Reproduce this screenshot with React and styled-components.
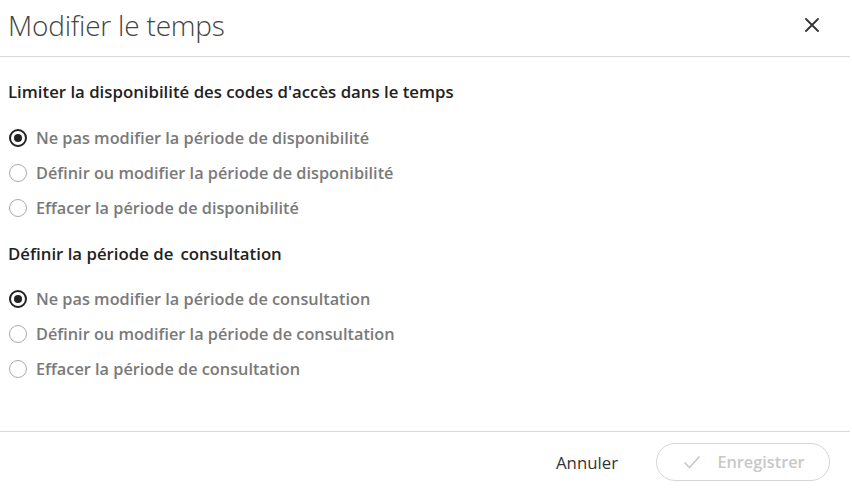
import styled, { createGlobalStyle } from "styled-components";

const Global = createGlobalStyle`
  html, body { margin: 0; padding: 0; background: #fff; }
  body { font-family: "Open Sans", "Noto Sans", sans-serif; }
`;

const Dialog = styled.div`
  width: 850px;
  height: 492px;
  display: flex;
  flex-direction: column;
  background: #fff;
`;

const Header = styled.div`
  height: 56px;
  display: flex;
  align-items: center;
  justify-content: space-between;
  padding: 0 30px 0 8px;
  border-bottom: 1px solid #d9d9d9;
  box-sizing: content-box;
`;

const Title = styled.h1`
  margin: 0;
  font-size: 28px;
  font-weight: 300;
  color: #444;
  letter-spacing: -0.2px;
  padding-bottom: 6px;
`;

const CloseButton = styled.button`
  border: 0;
  background: none;
  padding: 0;
  width: 16px;
  height: 16px;
  display: flex;
  align-items: center;
  justify-content: center;
  cursor: pointer;
  margin-bottom: 6px;
`;

const Body = styled.div`
  flex: 1;
  padding: 23px 8px 0;
  display: flex;
  flex-direction: column;
`;

const Section = styled.div`
  display: flex;
  flex-direction: column;
  margin-bottom: ${(p) => (p.$last ? 0 : 17)}px;
`;

const Heading = styled.div`
  font-size: 16.8px;
  font-weight: 600;
  color: #222;
  line-height: 24px;
  margin-bottom: ${(p) => p.$gap}px;
`;

const Option = styled.label`
  display: flex;
  align-items: center;
  gap: 9px;
  height: 35px;
  font-size: 16.3px;
  font-weight: 600;
  color: #7a7a7a;
  cursor: pointer;
`;

const Radio = styled.span`
  width: 18px;
  height: 18px;
  border-radius: 50%;
  box-sizing: border-box;
  border: ${(p) => (p.$checked ? "2px solid #222" : "1.5px solid #aaa")};
  display: flex;
  align-items: center;
  justify-content: center;
  margin-left: 1px;
  &::after {
    content: "";
    width: 8px;
    height: 8px;
    border-radius: 50%;
    background: ${(p) => (p.$checked ? "#222" : "transparent")};
  }
`;

const Footer = styled.div`
  height: 60px;
  border-top: 1px solid #d9d9d9;
  display: flex;
  align-items: center;
  justify-content: flex-end;
  gap: 38px;
  padding: 0 20px 0 0;
`;

const TextButton = styled.button`
  border: 0;
  background: none;
  font-family: inherit;
  font-size: 16.8px;
  font-weight: 400;
  color: #333;
  padding: 0;
  cursor: pointer;
`;

const SaveButton = styled.button`
  width: 174px;
  height: 38px;
  border: 1px solid #d6d6d6;
  border-radius: 19px;
  background: #fff;
  font-family: inherit;
  font-size: 16.3px;
  font-weight: 600;
  color: #c8c8c8;
  display: flex;
  align-items: center;
  justify-content: center;
  gap: 16px;
  padding: 0 0 0 2px;
`;

const sections = [
  {
    title: "Limiter la disponibilité des codes d'accès dans le temps",
    gap: 16,
    options: [
      "Ne pas modifier la période de disponibilité",
      "Définir ou modifier la période de disponibilité",
      "Effacer la période de disponibilité",
    ],
  },
  {
    title: "Définir la période de\u2009 consultation",
    gap: 15,
    options: [
      "Ne pas modifier la période de consultation",
      "Définir ou modifier la période de consultation",
      "Effacer la période de consultation",
    ],
  },
];

export default function App() {
  return (
    <>
      <Global />
      <Dialog>
        <Header>
          <Title>Modifier le temps</Title>
          <CloseButton aria-label="Fermer">
            <svg width="14" height="14" viewBox="0 0 14 14">
              <path d="M1 1L13 13M13 1L1 13" stroke="#333" strokeWidth="1.8" strokeLinecap="round" />
            </svg>
          </CloseButton>
        </Header>
        <Body>
          {sections.map((s, i) => (
            <Section key={s.title} $last={i === sections.length - 1}>
              <Heading $gap={s.gap}>{s.title}</Heading>
              {s.options.map((o, j) => (
                <Option key={o}>
                  <Radio $checked={j === 0} />
                  {o}
                </Option>
              ))}
            </Section>
          ))}
        </Body>
        <Footer>
          <TextButton>Annuler</TextButton>
          <SaveButton disabled>
            <svg width="18" height="14" viewBox="0 0 18 14">
              <path d="M1.5 7.5L6.5 12.5L16.5 1.5" fill="none" stroke="#c8c8c8" strokeWidth="1.6" />
            </svg>
            Enregistrer
          </SaveButton>
        </Footer>
      </Dialog>
    </>
  );
}
